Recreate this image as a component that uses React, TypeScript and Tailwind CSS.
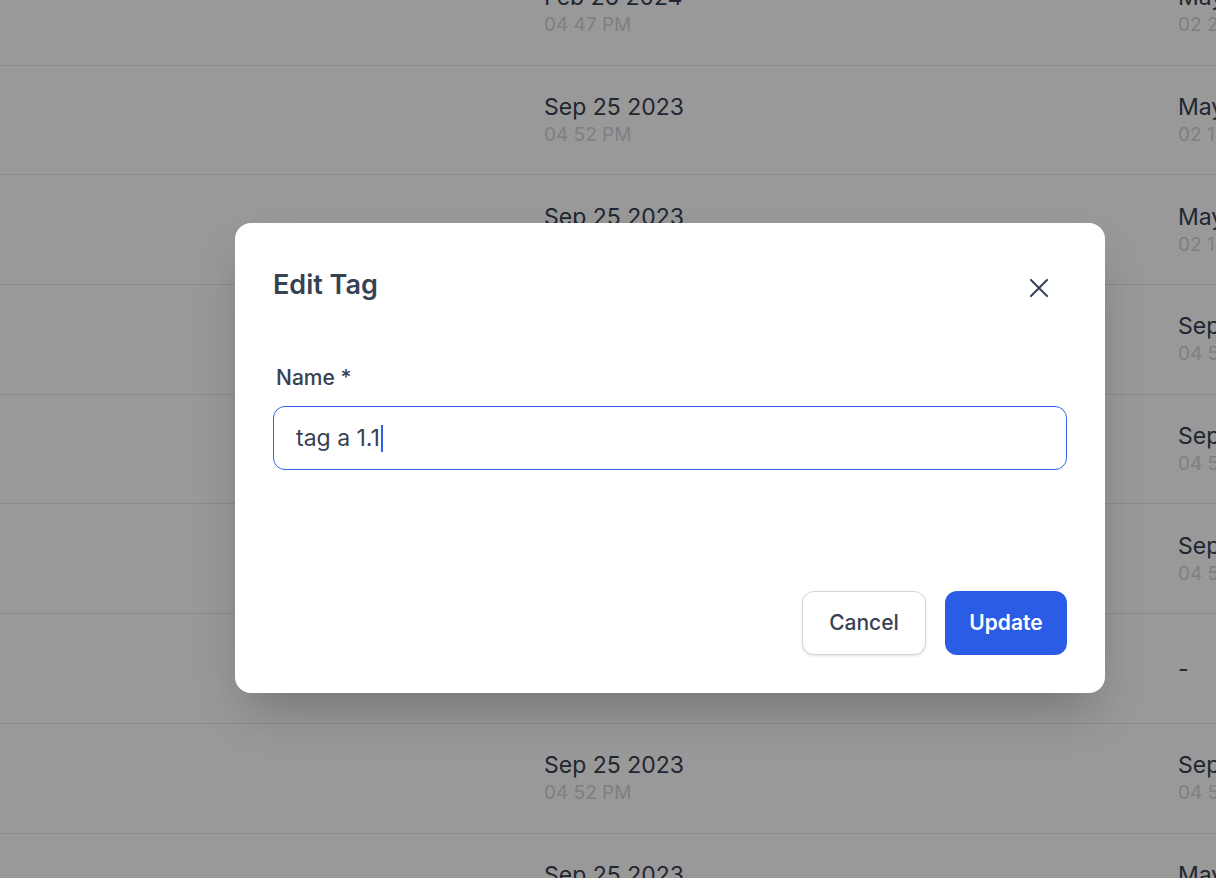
import React from "react";

const rows = [
  { date: "Feb 26 2024", time: "04 47 PM", other: "May 02 2024", otherTime: "02 21 PM" },
  { date: "Sep 25 2023", time: "04 52 PM", other: "May 02 2024", otherTime: "02 18 PM" },
  { date: "Sep 25 2023", time: "04 52 PM", other: "May 02 2024", otherTime: "02 18 PM" },
  { date: "Sep 25 2023", time: "04 52 PM", other: "Sep 25 2023", otherTime: "04 52 PM" },
  { date: "Sep 25 2023", time: "04 52 PM", other: "Sep 25 2023", otherTime: "04 52 PM" },
  { date: "Sep 25 2023", time: "04 52 PM", other: "Sep 25 2023", otherTime: "04 52 PM" },
  { date: "Sep 25 2023", time: "04 52 PM", other: "-", otherTime: "" },
  { date: "Sep 25 2023", time: "04 52 PM", other: "Sep 25 2023", otherTime: "04 52 PM" },
  { date: "Sep 25 2023", time: "04 52 PM", other: "May 02 2024", otherTime: "02 18 PM" },
];

function App() {
  return (
    <div
      className="relative h-[878px] w-[1216px] overflow-hidden bg-white"
      style={{ fontFamily: "Inter, 'Noto Sans', sans-serif" }}
    >
      {/* table behind the modal */}
      <div className="-mt-[44px] flex flex-col">
        {rows.map((r, i) => (
          <div key={i} className="flex h-[109.7px] items-center border-b border-gray-200">
            <div className="w-[544px] shrink-0" />
            <div className="flex w-[634px] shrink-0 flex-col pt-0.5">
              <span className="text-[23px] leading-7 text-gray-700">{r.date}</span>
              <span className="text-[19px] leading-7 text-gray-300">{r.time}</span>
            </div>
            <div className="flex flex-col whitespace-nowrap pt-0.5">
              <span className="text-[23px] leading-7 text-gray-700">{r.other}</span>
              {r.otherTime && (
                <span className="text-[19px] leading-7 text-gray-300">{r.otherTime}</span>
              )}
            </div>
          </div>
        ))}
      </div>

      {/* overlay */}
      <div className="absolute inset-0 bg-black/40 pl-[235px] pt-[223px]">
        <div className="flex w-[870px] flex-col rounded-2xl bg-white p-[38px] shadow-2xl">
          <div className="flex h-12 items-center justify-between">
            <h2 className="text-[27px] font-semibold text-gray-700">Edit Tag</h2>
            <button className="mr-[19px] mt-1.5 text-gray-700">
              <svg width="18" height="18" viewBox="0 0 18 18" fill="none">
                <path d="M1 1L17 17M17 1L1 17" stroke="currentColor" strokeWidth="2" strokeLinecap="round" />
              </svg>
            </button>
          </div>

          <label className="mt-[55px] pl-[3px] text-[21px] font-medium leading-7 text-gray-700">
            Name *
          </label>
          <div className="mt-[14px] flex h-16 items-center rounded-xl border border-[#2f62e6] px-[22px]">
            <span className="text-[23px] text-gray-700">tag a 1.1</span>
            <span className="ml-px h-[27px] w-[2px] bg-[#2f62e6]" />
          </div>

          <div className="mt-[121px] flex justify-end gap-[19px]">
            <button className="h-16 w-[124px] rounded-xl border border-gray-300 bg-white text-[21px] font-medium text-gray-700 shadow-sm">
              Cancel
            </button>
            <button className="h-16 w-[122px] rounded-xl bg-[#2b5ce6] text-[21px] font-semibold text-white">
              Update
            </button>
          </div>
        </div>
      </div>
    </div>
  );
}

export default App;
